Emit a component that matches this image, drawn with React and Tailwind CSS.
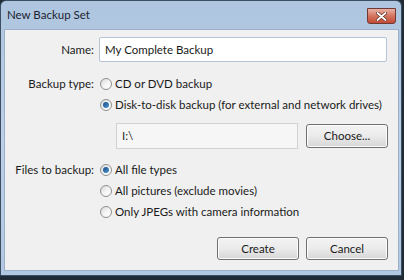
import React from "react";

const font = { fontFamily: 'Lato, "Noto Sans", sans-serif' };

function Radio({ checked, label }) {
  return (
    <div className="flex items-center h-[21px]">
      <span className="ml-[1px] w-[12px] h-[12px] rounded-full border border-[#8e8f8f] bg-gradient-to-br from-[#d8d8d8] via-[#f4f4f4] to-[#ffffff] flex items-center justify-center shrink-0">
        {checked && (
          <span className="w-[6px] h-[6px] rounded-full bg-gradient-to-br from-[#1b4e7f] to-[#4a98d8]" />
        )}
      </span>
      <span className="ml-[3px] text-[11.5px] text-[#1a1a1a] whitespace-nowrap">{label}</span>
    </div>
  );
}

function Button({ children, className = "" }) {
  return (
    <div
      className={
        "flex items-center justify-center rounded-[3px] border border-[#707070] bg-gradient-to-b from-[#f3f3f3] via-[#ebebeb] to-[#d6d6d6] shadow-[inset_0_0_0_1px_#fcfcfc] text-[11.5px] text-[#1a1a1a] shrink-0 " +
        className
      }
    >
      {children}
    </div>
  );
}

export default function App() {
  return (
    <div className="w-[404px] h-[280px] bg-[#1f2c35] overflow-hidden" style={font}>
      <div className="w-[402px] h-[276px] rounded-t-[6px] border border-[#3c4e62] bg-gradient-to-b from-[#aec5df] via-[#bcd0e7] to-[#b2c8e2] flex flex-col pl-[3px] pr-[2px] pb-[4px]">
        <div className="h-[28px] flex items-center justify-between shrink-0">
          <span className="ml-[3px] text-[11.5px] text-[#1b2430]">New Backup Set</span>
          <div className="mr-[3px] mt-[2px] w-[29px] h-[16px] rounded-b-[3px] border border-[#6e3a33] bg-gradient-to-b from-[#e8b2a4] via-[#d4735f] to-[#c24a35] flex items-center justify-center">
            <svg width="11" height="9" viewBox="0 0 11 9">
              <path d="M1.5 1 L9.5 8 M9.5 1 L1.5 8" stroke="#5a2a22" strokeWidth="3.2" strokeLinecap="round" />
              <path d="M1.5 1 L9.5 8 M9.5 1 L1.5 8" stroke="#ffffff" strokeWidth="1.8" strokeLinecap="round" />
            </svg>
          </div>
        </div>
        <div className="flex-1 bg-[#f0f0f0] border border-[#9bb0c8] flex flex-col pt-[7px]">
          <div className="flex items-center h-[25px]">
            <span className="w-[89px] shrink-0 text-right text-[11.5px] text-[#1a1a1a]">Name:</span>
            <div className="ml-[5px] w-[288px] h-[25px] rounded-[2px] border border-[#b4c3d6] bg-white flex items-center pl-[5px] text-[11.5px] text-[#1a1a1a]">
              My Complete Backup
            </div>
          </div>
          <div className="flex mt-[11px]">
            <span className="w-[89px] shrink-0 h-[21px] flex items-center justify-end text-[11.5px] text-[#1a1a1a]">Backup type:</span>
            <div className="ml-[5px] flex flex-col">
              <Radio label="CD or DVD backup" />
              <Radio checked label="Disk-to-disk backup (for external and network drives)" />
            </div>
          </div>
          <div className="flex items-center mt-[8px] ml-[111px]">
            <div className="w-[182px] h-[26px] border border-[#d2d2d2] bg-[#f6f6f6] flex items-center pl-[5px] text-[11.5px] text-[#2a2a2a]">
              I:\
            </div>
            <Button className="ml-[8px] w-[82px] h-[24px]">Choose...</Button>
          </div>
          <div className="flex mt-[10px]">
            <span className="w-[89px] shrink-0 h-[21px] flex items-center justify-end text-[11.5px] text-[#1a1a1a]">Files to backup:</span>
            <div className="ml-[5px] flex flex-col">
              <Radio checked label="All file types" />
              <Radio label="All pictures (exclude movies)" />
              <Radio label="Only JPEGs with camera information" />
            </div>
          </div>
          <div className="flex justify-end mt-[15px] pr-[10px] gap-[7px]">
            <Button className="w-[82px] h-[23px]">Create</Button>
            <Button className="w-[82px] h-[23px]">Cancel</Button>
          </div>
        </div>
      </div>
    </div>
  );
}
